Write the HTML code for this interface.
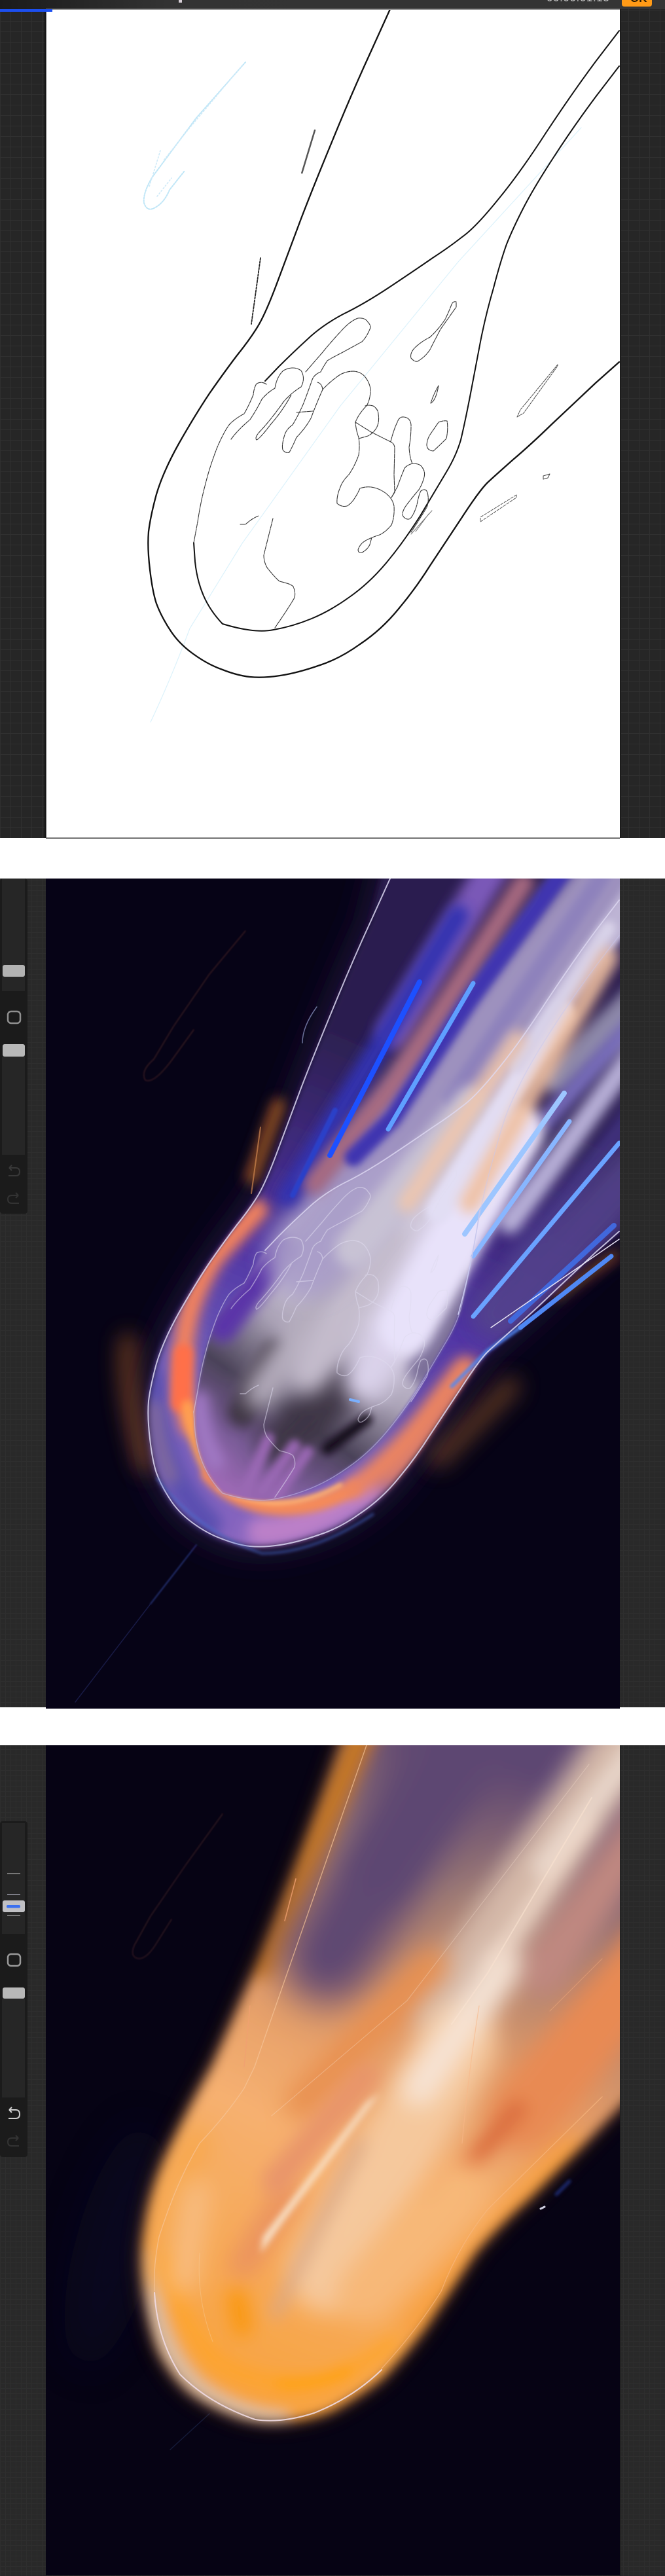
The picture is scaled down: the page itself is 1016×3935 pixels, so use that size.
<!DOCTYPE html>
<html><head><meta charset="utf-8"><title>Comet</title>
<style>html,body{margin:0;padding:0;background:#fff}body{width:1016px;height:3935px;overflow:hidden}svg{display:block}</style></head>
<body>
<svg xmlns="http://www.w3.org/2000/svg" width="1016" height="3935" viewBox="0 0 1016 3935">
<defs>
<pattern id="grid" width="16" height="16" patternUnits="userSpaceOnUse"><rect width="16" height="16" fill="#262626"/><path d="M.5 0V16M0 .5H16" stroke="#303030" stroke-width="1"/></pattern>
<pattern id="grid2" width="8" height="8" patternUnits="userSpaceOnUse"><rect width="8" height="8" fill="#292929"/><path d="M.5 0V8M0 .5H8" stroke="#2e2e2e" stroke-width="1"/></pattern>
<filter id="b1" filterUnits="userSpaceOnUse" x="-100" y="-300" width="1400" height="1800"><feGaussianBlur stdDeviation="1"/></filter>
<filter id="b2" filterUnits="userSpaceOnUse" x="-100" y="-300" width="1400" height="1800"><feGaussianBlur stdDeviation="2.5"/></filter>
<filter id="b5" filterUnits="userSpaceOnUse" x="-100" y="-300" width="1400" height="1800"><feGaussianBlur stdDeviation="5"/></filter>
<filter id="b9" filterUnits="userSpaceOnUse" x="-100" y="-300" width="1400" height="1800"><feGaussianBlur stdDeviation="9"/></filter>
<filter id="b16" filterUnits="userSpaceOnUse" x="-100" y="-300" width="1400" height="1800"><feGaussianBlur stdDeviation="16"/></filter>
<filter id="b30" filterUnits="userSpaceOnUse" x="-200" y="-300" width="1600" height="1800"><feGaussianBlur stdDeviation="30"/></filter>
<clipPath id="cv"><rect x="70" y="14" width="877" height="1268"/></clipPath>
<path id="outer" d="M596 14L567 78Q538 141 509 212Q480 282 460 334Q441 385 423 433Q405 481 393 500Q382 518 362 543Q343 568 320 601Q298 634 273 678Q249 721 239 755Q230 788 227 812Q225 837 229 870Q233 904 239 922Q246 941 259 961Q272 982 294 998Q317 1015 340 1023Q363 1032 382 1034Q402 1036 428 1032Q454 1028 486 1017Q518 1007 550 984Q583 962 609 930Q635 899 657 864Q680 829 706 790Q732 750 745 737Q758 725 784 702Q810 680 842 649Q875 618 910 585L946 553"/>
<path id="body" d="M596 -40L567 78Q538 141 509 212Q480 282 460 334Q441 385 423 433Q405 481 393 500Q382 518 362 543Q343 568 320 601Q298 634 273 678Q249 721 239 755Q230 788 227 812Q225 837 229 870Q233 904 239 922Q246 941 259 961Q272 982 294 998Q317 1015 340 1023Q363 1032 382 1034Q402 1036 428 1032Q454 1028 486 1017Q518 1007 550 984Q583 962 609 930Q635 899 657 864Q680 829 706 790Q732 750 745 737Q758 725 784 702Q810 680 842 649Q875 618 910 585L1010 500L1010 -40Z"/>
<path id="innerA" d="M946 47L910 94Q875 141 834 203Q794 265 760 306Q726 348 706 362Q687 377 661 394Q635 412 596 438Q557 464 524 480Q492 497 470 518Q447 539 426 560L405 582"/>
<path id="innerB" d="M296 829Q296 829 298 858Q301 887 311 910Q321 933 340 953Q389 968 418 962Q447 957 476 945Q505 933 534 912Q564 891 590 860Q616 829 642 788Q667 746 682 721Q697 696 704 672Q710 647 718 606Q726 564 734 522Q742 481 754 440Q765 398 774 373Q784 348 800 317Q816 286 846 240Q875 195 910 148L946 101"/>
<path id="inside" d="M1000 -20L910 94Q875 141 834 203Q794 265 760 306Q726 348 706 362Q687 377 661 394Q635 412 596 438Q557 464 524 480Q492 497 470 518Q447 539 426 560L405 582L373 632L332 683Q320 714 314 739Q307 764 302 797Q296 829 298 858Q301 887 311 910Q321 933 340 953Q389 968 418 962Q447 957 476 945Q505 933 534 912Q564 891 590 860Q616 829 642 788Q667 746 682 721Q697 696 704 672Q710 647 718 606Q726 564 734 522Q742 481 754 440Q765 398 774 373Q784 348 800 317Q816 286 846 240Q875 195 910 148L1010 30Z"/>
<path id="body3" d="M535 -30Q490 100 454 194Q425 270 395 345Q360 425 324 505Q290 565 259 630Q230 690 222 748Q214 790 219 832Q224 890 242 938Q264 982 294 1005Q327 1027 365 1040Q392 1048 421 1048Q465 1046 505 1031Q545 1010 583 981Q615 948 648 905Q690 843 726 788Q765 743 810 704Q850 663 894 620L1010 500L1010 -30Z"/>
<clipPath id="cBody"><use href="#body"/></clipPath>
<clipPath id="cIn"><use href="#inside"/></clipPath>
<clipPath id="cBody3"><use href="#body3"/></clipPath>
<g id="fingers" fill="none">
<path d="M407 587Q400 582 392 586Q388 592 387 603Q380 620 373 632Q358 640 350 649Q342 660 332 683Q320 714 314 739Q307 764 302 797L296 829"/>
<path d="M353 671Q362 658 382 641Q392 626 400 610Q408 600 420 593Q423 575 433 566Q448 558 460 566Q467 578 460 591Q445 600 433 614Q417 637 400 656Q388 668 392 672Q397 670 413 649Q433 626 445 603"/>
<path d="M467 568Q480 553 493 538Q506 522 520 507Q535 490 547 486Q558 485 562 492Q568 498 565 503Q560 515 553 522Q535 532 520 540Q508 546 500 551Q494 560 490 568Q480 572 477 580Q470 600 463 618Q455 636 447 649Q438 655 435 664Q430 680 432 687Q436 693 442 691Q448 680 453 668Q466 655 475 639Q484 615 493 595Q505 582 520 572Q530 567 540 567Q552 568 558 576Q565 585 566 595Q566 610 560 620Q548 632 543 645Q544 658 548 668Q550 682 548 695Q542 712 533 725Q523 735 520 744Q514 758 515 769Q522 775 530 773Q540 768 550 746Q558 743 567 744Q580 746 590 754Q600 762 602 773Q603 790 598 802Q590 812 580 817Q570 820 560 825Q550 830 547 840Q548 846 553 844Q561 840 565 832L568 821"/>
<path d="M558 620Q563 618 570 620Q578 625 578 633Q580 645 575 654Q570 662 562 666L548 670"/>
<path d="M543 645L567 660L597 675Q603 678 603 685L602 725L603 752L598 760"/>
<path d="M597 674Q602 655 607 645Q610 636 617 637Q627 638 628 649Q628 668 625 683Q626 700 630 708Q642 708 645 714Q650 720 648 729Q645 740 640 748Q628 762 620 773Q612 785 617 790Q622 795 627 792Q633 785 637 771Q640 755 643 750Q650 745 653 752Q656 765 652 775Q640 795 628 813"/>
<path d="M630 708Q618 712 617 718Q612 730 607 744L598 760"/>
<path d="M670 645Q678 642 683 643Q685 655 682 670Q672 680 662 689Q652 688 652 679Q653 670 657 664Z"/>
<path d="M670 589Q662 603 658 616Q666 612 670 589Z"/>
<path d="M697 461Q692 460 690 465Q685 478 680 488Q670 503 657 515Q643 522 633 532Q626 540 628 547Q633 553 638 552Q650 545 657 534Q665 518 673 503Q685 486 697 469Z"/>
<path d="M417 792Q410 820 403 848Q403 858 408 867Q418 880 427 888Q445 892 448 896Q452 905 450 913Q440 930 420 959"/>
<path d="M367 801L375 801Q385 792 395 788"/>
<path d="M453 630L478 628M485 584Q492 586 493 595"/>
</g>
<linearGradient id="g2" gradientUnits="userSpaceOnUse" x1="330" y1="1020" x2="640" y2="300"><stop offset="0" stop-color="#8a66c0"/><stop offset=".3" stop-color="#6d5cb8"/><stop offset=".55" stop-color="#5034a4"/><stop offset="1" stop-color="#2c1f50"/></linearGradient>
<linearGradient id="g2i" gradientUnits="userSpaceOnUse" x1="370" y1="960" x2="560" y2="690"><stop offset="0" stop-color="#9c68b4"/><stop offset=".2" stop-color="#7a5c98"/><stop offset=".45" stop-color="#4a4258"/><stop offset=".75" stop-color="#a8a0b4"/><stop offset="1" stop-color="#cfc8da"/></linearGradient>
<linearGradient id="g3" gradientUnits="userSpaceOnUse" x1="320" y1="1020" x2="780" y2="40"><stop offset="0" stop-color="#f8a23c"/><stop offset=".4" stop-color="#f6b070"/><stop offset=".6" stop-color="#e09a68"/><stop offset=".8" stop-color="#a07c74"/><stop offset="1" stop-color="#5d4672"/></linearGradient>
<linearGradient id="top" x1="0" x2="1" y1="0" y2="0"><stop offset="0" stop-color="#1b1b1b"/><stop offset=".1" stop-color="#242424"/><stop offset=".25" stop-color="#333"/><stop offset="1" stop-color="#353535"/></linearGradient>
</defs>

<rect width="1016" height="3935" fill="#fff"/>

<!-- SECTION 1 -->
<rect x="0" y="0" width="1016" height="1280" fill="url(#grid)"/>
<rect x="68" y="14" width="2" height="1266" fill="#141414"/>
<rect x="947" y="14" width="2" height="1266" fill="#1c1c1c"/>
<rect x="70" y="14" width="877" height="1266" fill="#fff"/>
<rect x="70" y="14" width="1.5" height="1266" fill="#9a9a9a"/>
<g clip-path="url(#cv)" fill="none" stroke-linecap="round" stroke-linejoin="round">
<path d="M888 195L700 400L520 620L370 830L290 960Q260 1040 230 1103" stroke="#dcf2fb" stroke-width="1.2"/>
<path d="M375 95L300 180L259 235L233 270Q218 295 220 310Q224 322 233 319Q250 312 259 290L282 261" stroke="#bfe6f7" stroke-width="2" stroke-dasharray="2 2"/>
<path d="M370 100L290 195L250 245M245 230L228 285M240 300L262 272" stroke="#cfeaf8" stroke-width="1.6" stroke-dasharray="2 3"/>
<g stroke="#111"><use href="#outer" stroke-width="2.3"/><use href="#innerA" stroke-width="2"/><use href="#innerB" stroke-width="2"/></g>
<use href="#fingers" stroke="#333" stroke-width="1.1" stroke-dasharray="7 1.2"/>
<path d="M398 394L384 495" stroke="#222" stroke-width="1.8" stroke-dasharray="3 2"/>
<path d="M481 199L461 265" stroke="#555" stroke-width="2.5" stroke-dasharray="2 1"/>
<path d="M852 557L795 626L790 637L800 631L852 559Z" stroke="#444" stroke-width="1" stroke-dasharray="3 1.5"/>
<path d="M789 756L734 790L734 797L789 760Z" stroke="#555" stroke-width="1" stroke-dasharray="4 2"/>
<path d="M830 727L840 724L837 730L830 732Z" stroke="#444" stroke-width="1"/>
<path d="M660 780L628 816M655 785L635 812" stroke="#777" stroke-width="1"/>
</g>
<rect x="0" y="0" width="1016" height="14" fill="url(#top)"/>
<rect x="70" y="13.5" width="877" height="1.5" fill="#9a9a9a"/>
<rect x="0" y="14" width="80" height="4" fill="#1c4ff0"/>
<rect x="273" y="0" width="5" height="4" fill="#d8d0d8"/>
<text x="835" y="2" font-family="Liberation Sans, sans-serif" font-size="17" fill="#cfcfcf" letter-spacing=".6">00:00:01:15</text>
<path d="M950 0H996V6Q996 10 992 10H954Q950 10 950 6Z" fill="#ff9a16"/>
<text x="963" y="3" font-family="Liberation Sans, sans-serif" font-size="17" font-weight="700" fill="#2a1a00">OK</text>
<rect x="70" y="1279.5" width="877" height="1.5" fill="#3c3c3c"/>

<!-- SECTION 2 -->
<rect x="0" y="1342" width="1016" height="1266" fill="url(#grid2)"/>
<rect x="0" y="1342" width="42" height="512" rx="4" fill="#1b1b1b"/>
<rect x="3" y="1342" width="35" height="172" fill="#262626"/>
<rect x="3" y="1614" width="35" height="150" fill="#262626"/>
<rect x="4" y="1474" width="34" height="18" rx="3" fill="#b2b2b2"/>
<rect x="12" y="1545" width="19" height="18" rx="5" fill="none" stroke="#8f8f8f" stroke-width="2.5"/>
<rect x="4" y="1595" width="34" height="19" rx="3" fill="#b8b8b8"/>
<path d="M14 1784H24Q30 1784 30 1790Q30 1796 24 1796H13M14 1784L18 1780M14 1784L18 1788" fill="none" stroke="#383838" stroke-width="2"/>
<path d="M28 1826H18Q12 1826 12 1832Q12 1838 18 1838H29M28 1826L24 1822M28 1826L24 1830" fill="none" stroke="#333" stroke-width="2"/>
<g transform="translate(0 1328)">
<g clip-path="url(#cv)" stroke-linecap="round" fill="none">
<rect x="70" y="14" width="877" height="1268" fill="#060316"/>
<path d="M375 94L320 160L265 240L235 290Q214 308 222 322Q235 328 262 292L296 245" stroke="#3a1f22" stroke-width="1.5" filter="url(#b1)"/>
<path d="M300 1032L230 1122" stroke="#26357a" stroke-width="1.8" filter="url(#b1)"/>
<path d="M230 1122L115 1272" stroke="#181a44" stroke-width="1.5"/>
<!-- outer glow -->
<use href="#body" fill="#2a1c48" filter="url(#b30)" stroke="none"/>
<path d="M425 360L385 470" stroke="#b86420" stroke-width="22" filter="url(#b9)" opacity=".7"/>
<path d="M196 720Q188 800 222 910" stroke="#a05820" stroke-width="22" filter="url(#b16)" opacity=".75"/>
<path d="M670 900L780 790" stroke="#7a4828" stroke-width="30" filter="url(#b16)" opacity=".7"/>
<path d="M850 650L940 590" stroke="#a85a28" stroke-width="16" filter="url(#b9)" opacity=".6"/>
<!-- body -->
<g filter="url(#b5)"><g clip-path="url(#cBody)">
<use href="#body" fill="url(#g2)" stroke="none"/>
<!-- lower ring -->
<path d="M232 780Q238 920 320 1000" stroke="#5a50b0" stroke-width="40" filter="url(#b9)"/>
<path d="M236 820Q240 880 262 930" stroke="#8a7098" stroke-width="18" filter="url(#b9)"/>
<path d="M400 1012Q470 1010 560 950" stroke="#bc80c8" stroke-width="46" filter="url(#b9)"/>
<path d="M590 930Q660 860 720 775" stroke="#e88060" stroke-width="40" filter="url(#b16)"/>
</g></g>
<g filter="url(#b2)"><g clip-path="url(#cBody)">
<!-- orange band -->
<path d="M395 520L330 590Q290 650 282 715Q272 790 290 850" stroke="#f5835c" stroke-width="30" filter="url(#b9)"/>
<path d="M280 740L276 815" stroke="#ff7048" stroke-width="30" filter="url(#b5)"/>
<path d="M286 820Q296 880 320 920" stroke="#ffa050" stroke-width="18" filter="url(#b5)"/>
<path d="M320 925Q350 960 400 972Q470 985 540 945" stroke="#f58a58" stroke-width="24" filter="url(#b5)"/>
<path d="M540 945Q600 905 650 840L710 760" stroke="#ec8460" stroke-width="30" filter="url(#b9)"/>
<path d="M335 945Q370 965 420 968Q470 968 520 940" stroke="#ffb070" stroke-width="7" filter="url(#b2)"/>
</g></g>
<!-- inside head -->
<g filter="url(#b2)"><g clip-path="url(#cIn)">
<use href="#inside" fill="url(#g2i)" stroke="none"/>
<path d="M340 700L430 580" stroke="#5a34a8" stroke-width="46" filter="url(#b9)"/>
<path d="M650 760L720 640" stroke="#7a6e98" stroke-width="60" filter="url(#b9)"/>
<path d="M370 830L420 740" stroke="#3a3040" stroke-width="44" filter="url(#b9)"/>
<path d="M430 880L520 790" stroke="#3c3444" stroke-width="70" filter="url(#b16)"/>
<path d="M500 885L560 840" stroke="#15101c" stroke-width="18" filter="url(#b5)"/>
<path d="M400 800L520 620" stroke="#b4acbc" stroke-width="54" filter="url(#b16)"/>
<path d="M470 770L600 570" stroke="#c4bccc" stroke-width="60" filter="url(#b16)"/>
<path d="M560 780L680 560" stroke="#dad2ea" stroke-width="70" filter="url(#b16)"/>
<path d="M375 950L410 870M400 950L450 880M420 960L470 890" stroke="#9a68b4" stroke-width="18" filter="url(#b5)"/>
<path d="M330 905Q305 860 306 810" stroke="#a078c4" stroke-width="26" filter="url(#b9)"/>
</g></g>
<!-- tail streaks across body -->
<g filter="url(#b2)"><g clip-path="url(#cBody)">
<path d="M470 590L700 300L1010 -70" stroke="#a89cc8" stroke-width="130" filter="url(#b16)" opacity=".92"/>
<path d="M770 -30L600 250" stroke="#7a58b8" stroke-width="50" filter="url(#b9)"/>
<path d="M700 70L440 500" stroke="#3030b0" stroke-width="32" filter="url(#b9)"/>
<path d="M800 20L600 330L480 480" stroke="#a86a80" stroke-width="32" filter="url(#b9)"/>
<path d="M870 -10L717 201L600 380L540 440" stroke="#4036b0" stroke-width="28" filter="url(#b5)"/>
<path d="M920 10L690 350" stroke="#8e82bc" stroke-width="26" filter="url(#b5)"/>
<path d="M990 10L740 370" stroke="#bdb4d4" stroke-width="40" filter="url(#b5)"/>
<path d="M1000 170L850 320" stroke="#8d88a8" stroke-width="46" filter="url(#b9)"/>
<path d="M990 210L833 385" stroke="#7a70c0" stroke-width="26" filter="url(#b9)"/>
<path d="M990 250L780 540" stroke="#b8b0d8" stroke-width="34" filter="url(#b9)"/>
<path d="M990 340L790 600" stroke="#4a3a90" stroke-width="30" filter="url(#b9)" opacity=".7"/>
<path d="M990 440L760 680" stroke="#54448c" stroke-width="80" filter="url(#b16)" opacity=".85"/>
<path d="M620 700L790 400" stroke="#e8e2fa" stroke-width="84" filter="url(#b9)"/>
<path d="M540 580L720 360" stroke="#c8c2d4" stroke-width="56" filter="url(#b9)"/>
<path d="M670 520L860 220" stroke="#e2def4" stroke-width="40" filter="url(#b5)"/>
<path d="M790 300L930 90" stroke="#d8d2e8" stroke-width="22" filter="url(#b5)"/>
<path d="M622 510L790 260" stroke="#f0c6ac" stroke-width="28" filter="url(#b9)" opacity=".9"/>
<path d="M717 510L930 135" stroke="#f0bf9e" stroke-width="30" filter="url(#b9)" opacity=".9"/>
</g></g>
<!-- lines -->
<path d="M512 368L447 498" stroke="#2b3fc8" stroke-width="8" filter="url(#b1)"/>
<path d="M641 172L504 437" stroke="#1d50ff" stroke-width="8"/>
<path d="M723 174L593 397" stroke="#5f9fff" stroke-width="7"/>
<path d="M862 342L710 557" stroke="#9dc6ff" stroke-width="8"/>
<path d="M870 385L723 591" stroke="#88b6ff" stroke-width="7"/>
<path d="M946 418L723 683" stroke="#6aa2ff" stroke-width="7"/>
<path d="M938 544L780 690" stroke="#4168dc" stroke-width="8"/>
<path d="M934 591L795 700" stroke="#4f88f4" stroke-width="7"/>
<path d="M795 700L745 735L690 790" stroke="#4f88f4" stroke-width="5" filter="url(#b2)"/>
<path d="M535 810L548 813" stroke="#7ab0ff" stroke-width="4"/>
<use href="#fingers" stroke="#e0dcf0" stroke-width="1.4" opacity=".55"/>
<use href="#outer" stroke="#dcd8f2" stroke-width="2" opacity=".85"/>
<use href="#innerA" stroke="#dedaf2" stroke-width="1.8" opacity=".8"/>
<use href="#innerB" stroke="#c8c8f0" stroke-width="1.4" opacity=".5"/>
<path d="M484 210Q462 240 462 265" stroke="#6a7098" stroke-width="1.5"/>
<path d="M398 394L384 495" stroke="#d08850" stroke-width="2" opacity=".7"/>
<path d="M946 565L750 700" stroke="#e8e4f4" stroke-width="1.5"/>
<path d="M733 520Q722 600 700 680" stroke="#c8c8ee" stroke-width="1.5"/>
<path d="M240 930Q300 1010 400 1045Q480 1045 570 985" stroke="#4a70d0" stroke-width="3" filter="url(#b2)" opacity=".7"/>
</g>
</g>

<!-- SECTION 3 -->
<rect x="0" y="2666" width="1016" height="1269" fill="url(#grid2)"/>
<rect x="0" y="2782" width="42" height="513" rx="4" fill="#1b1b1b"/>
<rect x="3" y="2785" width="35" height="169" fill="#262626"/>
<rect x="3" y="3053" width="35" height="151" fill="#262626"/>
<rect x="11" y="2861" width="20" height="2" fill="#777"/>
<rect x="11" y="2893" width="20" height="2" fill="#7c7c86"/>
<rect x="11" y="2925" width="20" height="2" fill="#777"/>
<rect x="4" y="2903" width="34" height="18" rx="3" fill="#c0c0c4"/>
<rect x="10" y="2910" width="21" height="4.5" rx="2" fill="#3a70f0"/>
<rect x="12" y="2985" width="19" height="18" rx="5" fill="none" stroke="#9a9a9a" stroke-width="2.5"/>
<rect x="4" y="3036" width="34" height="17" rx="3" fill="#b8b8b8"/>
<path d="M14 3223H24Q30 3223 30 3229.5Q30 3236 24 3236H13M14 3223L18 3219M14 3223L18 3227" fill="none" stroke="#cfcfcf" stroke-width="2"/>
<path d="M28 3266H18Q12 3266 12 3272Q12 3278 18 3278H29M28 3266L24 3262M28 3266L24 3270" fill="none" stroke="#333" stroke-width="2"/>
<g transform="translate(0 2652)">
<g clip-path="url(#cv)" stroke-linecap="round" fill="none">
<rect x="70" y="14" width="877" height="1270" fill="#060314"/>
<ellipse cx="175" cy="780" rx="60" ry="190" fill="#0b0e2c" filter="url(#b30)" stroke="none" transform="rotate(15 175 780)" opacity=".45"/>
<path d="M340 119L285 195L230 275L205 320Q198 338 212 340Q225 340 240 315L262 280" stroke="#341c20" stroke-width="1.5" filter="url(#b1)"/>
<path d="M320 1035L260 1090" stroke="#141a38" stroke-width="1.5"/>
<!-- halo -->
<use href="#body3" fill="#7a4420" filter="url(#b16)" stroke="none" opacity=".75"/>
<!-- main body -->
<g filter="url(#b9)"><g clip-path="url(#cBody3)">
<use href="#body3" fill="url(#g3)" stroke="none"/>
<!-- rim tones -->
<path d="M225 800Q232 930 300 995Q360 1040 430 1046" stroke="#d8bca4" stroke-width="30" filter="url(#b5)"/>
<path d="M300 620Q245 720 240 820" stroke="#f7a850" stroke-width="50" filter="url(#b16)"/>
<path d="M258 800Q268 890 330 955Q400 1000 500 985Q550 965 600 925" stroke="#ffa428" stroke-width="20" filter="url(#b9)"/>
<path d="M430 990Q480 992 530 970" stroke="#ffa208" stroke-width="16" filter="url(#b5)"/>
<path d="M640 900L870 640" stroke="#f8a040" stroke-width="60" filter="url(#b16)"/>
<!-- top tones -->
<path d="M560 -20L460 220L400 350" stroke="#c87824" stroke-width="44" filter="url(#b9)"/>
<path d="M740 -60L600 180L500 340" stroke="#5d4672" stroke-width="140" filter="url(#b30)"/>
<path d="M720 0L580 210" stroke="#5d4672" stroke-width="90" filter="url(#b16)"/>
<path d="M1010 -70L800 240L680 420" stroke="#d4b8a8" stroke-width="100" filter="url(#b16)"/>
<path d="M1010 -30L830 200" stroke="#e8d6ca" stroke-width="34" filter="url(#b9)"/>
<path d="M1010 100L830 360" stroke="#c08880" stroke-width="70" filter="url(#b16)"/>
<path d="M1010 320L800 580" stroke="#e88a52" stroke-width="110" filter="url(#b16)"/>
<path d="M660 350L460 560" stroke="#e89050" stroke-width="50" filter="url(#b16)"/>
<!-- center -->
<path d="M500 820L700 470" stroke="#f5c89c" stroke-width="120" filter="url(#b16)"/>
<path d="M640 540L770 350" stroke="#f6e4d6" stroke-width="52" filter="url(#b16)"/>
<path d="M750 350L900 130" stroke="#f2dccc" stroke-width="18" filter="url(#b9)"/>
<path d="M440 700L370 810" stroke="#e88e5e" stroke-width="36" filter="url(#b16)"/>
<path d="M560 520L420 680" stroke="#e8946a" stroke-width="40" filter="url(#b9)"/>
<path d="M551 622L421 882" stroke="#d8a888" stroke-width="16" filter="url(#b9)"/>
<path d="M790 570L670 710" stroke="#dc7040" stroke-width="30" filter="url(#b9)"/>
<path d="M700 690L560 850" stroke="#f7b878" stroke-width="90" filter="url(#b16)"/>
<path d="M362 860L370 900" stroke="#f99a14" stroke-width="36" filter="url(#b9)"/>
<path d="M300 700L280 830" stroke="#f8bc80" stroke-width="44" filter="url(#b16)"/>
</g></g>
<path d="M560 560L580 545L430 745L398 790L402 765Z" fill="#f8e4cc" stroke="none" filter="url(#b5)"/>
<!-- lines -->
<path d="M560 14L389 505L373 538Q345 580 305 622Q270 680 243 765Q234 810 236 848" stroke="#f6c498" stroke-width="1.4" opacity=".7"/>
<path d="M452 218L435 282M382 412L373 505" stroke="#f0a070" stroke-width="1.6" opacity=".8"/>
<path d="M236 850Q240 920 275 975Q320 1020 390 1044Q430 1050 480 1034Q540 1010 583 968" stroke="#f0dce4" stroke-width="2" opacity=".9"/>
<path d="M583 966Q635 910 674 848Q700 780 745 723L920 551" stroke="#f8b880" stroke-width="1.3" opacity=".7"/>
<path d="M732 412Q715 520 706 622" stroke="#f8b888" stroke-width="1.3" opacity=".6"/>
<path d="M904 94L745 362L690 440" stroke="#fae2d0" stroke-width="2" opacity=".6"/>
<path d="M900 43L622 404L415 580" stroke="#fae2d0" stroke-width="1.1" opacity=".35"/>
<path d="M305 790Q300 860 325 925" stroke="#f8cfa0" stroke-width="1.1" opacity=".4"/>
<path d="M920 340L840 420" stroke="#f8b080" stroke-width="1.1" opacity=".45"/>
<path d="M826 722L832 719" stroke="#cfcfe0" stroke-width="3"/>
<path d="M850 700L870 680" stroke="#1c2a70" stroke-width="5" filter="url(#b2)"/>
</g>
</g>
<rect x="947" y="2666" width="1" height="1269" fill="#1c1c1c"/>
</svg>
</body></html>
